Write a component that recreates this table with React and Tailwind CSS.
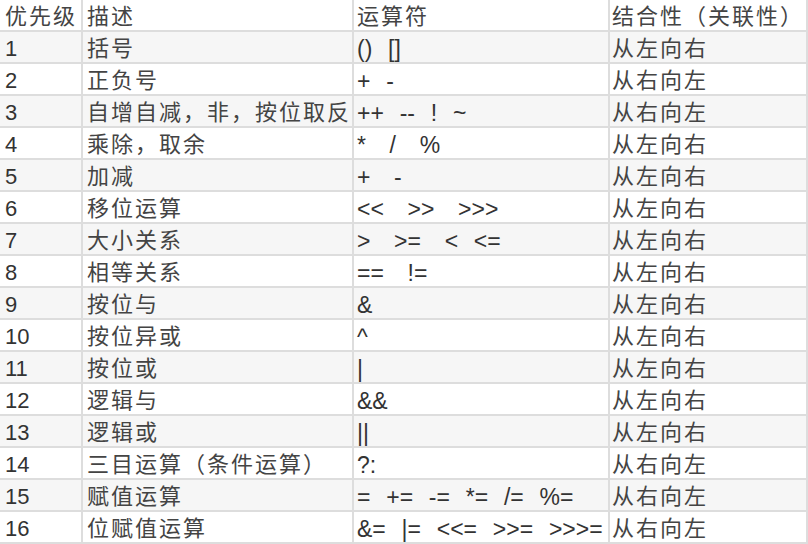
import React from "react";

const rows = [
  ["1", "括号", "()  []", "从左向右"],
  ["2", "正负号", "+  -", "从右向左"],
  ["3", "自增自减，非，按位取反", "++  --  !  ~", "从右向左"],
  ["4", "乘除，取余", "*   /   %", "从左向右"],
  ["5", "加减", "+   -", "从左向右"],
  ["6", "移位运算", "<<   >>   >>>", "从左向右"],
  ["7", "大小关系", ">   >=   <  <=", "从左向右"],
  ["8", "相等关系", "==   !=", "从左向右"],
  ["9", "按位与", "&", "从左向右"],
  ["10", "按位异或", "^", "从左向右"],
  ["11", "按位或", "|", "从左向右"],
  ["12", "逻辑与", "&&", "从左向右"],
  ["13", "逻辑或", "||", "从左向右"],
  ["14", "三目运算（条件运算）", "?:", "从右向左"],
  ["15", "赋值运算", "=  +=  -=  *=  /=  %=", "从右向左"],
  ["16", "位赋值运算", "&=  |=  <<=  >>=  >>>=", "从右向左"],
];

const cell = "h-[30px] pt-[4px] leading-[26px] whitespace-pre overflow-hidden";
const cjk = "tracking-[2px] text-[#444444]";

const Row = ({ data, shaded, header }) => {
  const bg = shaded ? "bg-[#f6f6f6]" : "bg-white";
  return (
    <>
      <div className={`${cell} ${bg} pl-[5px] ${header ? cjk : ""}`}>{data[0]}</div>
      <div className={`${cell} ${bg} pl-[4px] ${cjk}`}>{data[1]}</div>
      <div
        className={`${cell} ${bg} pl-[3px] ${header ? cjk : "text-[23px] [word-spacing:1.5px]"}`}
      >
        {data[2]}
      </div>
      <div className={`${cell} ${bg} pl-[2px] ${cjk}`}>{data[3]}</div>
    </>
  );
};

export default function App() {
  return (
    <div
      className="w-[808px] h-[544px] bg-[#dddddd] text-[22px] text-[#333333]"
      style={{ fontFamily: '"Liberation Sans", "Noto Sans CJK SC", sans-serif' }}
    >
      <div className="grid grid-cols-[81px_269px_254px_196px] gap-[2px] pr-[2px] pb-[2px]">
        <Row data={["优先级", "描述", "运算符", "结合性（关联性）"]} header />
        {rows.map((r, i) => (
          <Row key={r[0]} data={r} shaded={i % 2 === 0} />
        ))}
      </div>
    </div>
  );
}
